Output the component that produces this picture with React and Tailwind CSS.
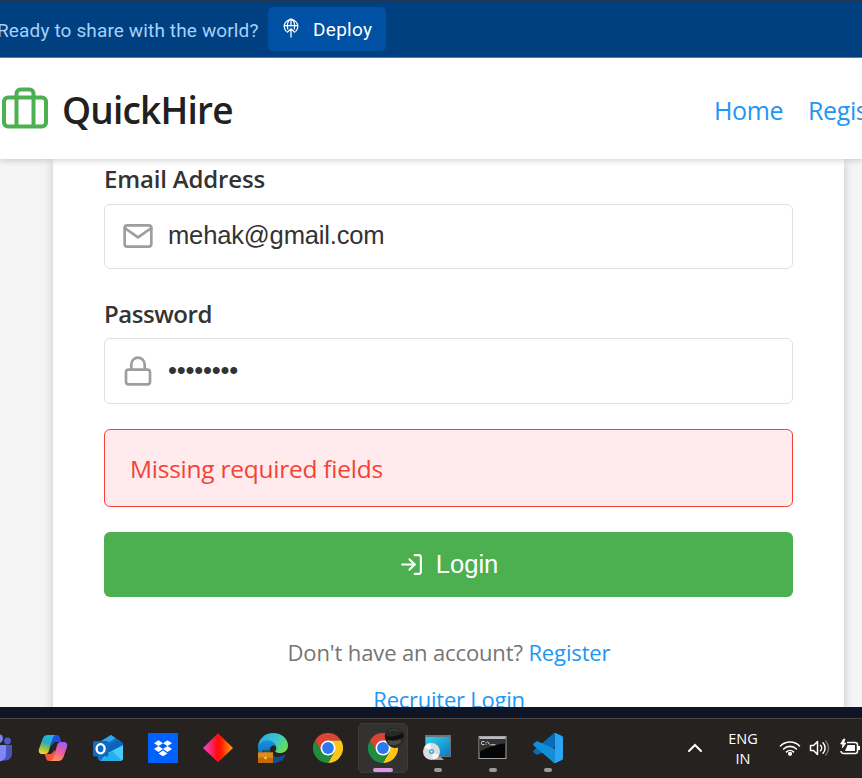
import React from 'react';
import { FiMail, FiLock, FiLogIn } from 'react-icons/fi';

const segoe = "font-['Open_Sans','Noto_Sans',sans-serif]";

function DeployIcon() {
  return (
    <svg width="16" height="20" viewBox="0 0 16 20" fill="none" stroke="#fff" strokeWidth="1.25" strokeLinecap="round">
      <path d="M3.200 13.200A6.800 6.800 0 1 1 12.800 13.200" />
      <path d="M4.800 11C3.500 6.800 5 1.600 8 1.200C11 1.600 12.500 6.800 11.200 11" />
      <path d="M1.500 7.500H14.500M8 1.200V8M8 11V19M4.300 14.200L8 10.800L11.700 14.200" />
    </svg>
  );
}

function Suitcase() {
  return (
    <svg width="48" height="44" viewBox="0 0 48 44" fill="none" stroke="#4caf50" strokeWidth="4" strokeLinejoin="round">
      <rect x="4" y="10.5" width="42" height="29" rx="4" />
      <path d="M16.5 39.5V6.5a4 4 0 0 1 4-4h9a4 4 0 0 1 4 4v33" />
    </svg>
  );
}

function Teams() {
  return (
    <svg width="30" height="30" viewBox="0 0 30 30">
      <circle cx="24.5" cy="8" r="3.4" fill="#5059c9" />
      <circle cx="15.5" cy="5.5" r="4.5" fill="#7b83eb" />
      <path d="M17 12h12v8.5c0 4-3 7-6.500 7H17z" fill="#4b53bc" />
      <path d="M6 12h17v9c0 5-3.500 7.500-8.500 7.500S6 26 6 21z" fill="#7f85f5" />
    </svg>
  );
}

function Copilot() {
  return (
    <svg width="30" height="30" viewBox="0 0 30 30">
      <defs>
        <linearGradient id="cpA" x1=".6" y1="0" x2=".3" y2="1">
          <stop offset="0" stopColor="#20b5ee" /><stop offset=".4" stopColor="#2aa8c0" />
          <stop offset=".7" stopColor="#8bc34a" /><stop offset="1" stopColor="#ffd21f" />
        </linearGradient>
        <linearGradient id="cpB" x1=".7" y1="0" x2=".3" y2="1">
          <stop offset="0" stopColor="#a05cf0" /><stop offset=".5" stopColor="#ee5c9c" /><stop offset="1" stopColor="#ff9a55" />
        </linearGradient>
      </defs>
      <path d="M14 2h5c2 0 2.600 1.500 3.200 3.600L23.500 9H17l-4 4z" fill="#1d4fd8" />
      <path d="M16 28h-5c-2 0-2.600-1.500-3.200-3.600L6.500 21H13l4-4z" fill="#f2553d" />
      <path d="M10 2h8c-2 0-3 2-3.600 4l-3.600 12c-.7 2.200-1.800 3-3.600 3H4c-3 0-3.700-2.500-3-5L4.500 6C5.500 3.500 7 2 10 2z" fill="url(#cpA)" />
      <path d="M20 28h-8c2 0 3-2 3.600-4l3.600-12c.7-2.200 1.800-3 3.600-3H26c3 0 3.700 2.500 3 5l-3.500 10c-1 2.500-2.500 4-5.500 4z" fill="url(#cpB)" />
    </svg>
  );
}

function Outlook() {
  return (
    <svg width="30" height="30" viewBox="0 0 30 30">
      <path d="M5 10L18 2l12 8v15a3 3 0 0 1-3 3H8a3 3 0 0 1-3-3z" fill="#1473c8" />
      <path d="M5 10L18 2l4.500 3L7 15z" fill="#2fa7ea" />
      <path d="M10 15L25 6.500l5 3.500v4L14 23z" fill="#0a63bd" />
      <path d="M13 21L30 12v13a3 3 0 0 1-3 3H8z" fill="#45cdf8" />
      <path d="M8 28l11-10 10 9.500-2 .5z" fill="#28aee9" />
      <rect x="0" y="8" width="15.500" height="15.500" rx="1.500" fill="#0f6cbd" />
      <ellipse cx="7.600" cy="15.700" rx="4" ry="4.600" fill="none" stroke="#fff" strokeWidth="2.300" />
    </svg>
  );
}

function Dropbox() {
  return (
    <svg width="30" height="30" viewBox="0 0 30 30">
      <rect width="30" height="30" fill="#0061ff" />
      <path d="M10.500 7.300l4.500 2.900-4.500 2.900-4.500-2.900zM19.500 7.300l4.500 2.900-4.500 2.900-4.500-2.900zM10.500 13.100l4.500 2.900-4.500 2.900L6 16zM19.500 13.100L24 16l-4.500 2.900L15 16zM15 17.500l4.500 2.900-4.500 2.900-4.500-2.900z" fill="#fff" />
    </svg>
  );
}

function Diamond() {
  return (
    <svg width="30" height="30" viewBox="0 0 30 30">
      <defs>
        <linearGradient id="dm" x1="0" x2="1">
          <stop offset="0" stopColor="#f04ad8" /><stop offset=".48" stopColor="#ff0a14" />
          <stop offset=".6" stopColor="#ff1a00" /><stop offset="1" stopColor="#ffa514" />
        </linearGradient>
      </defs>
      <path d="M15 .3L30 15 15 29.300 0 15z" fill="url(#dm)" />
    </svg>
  );
}

function Edge() {
  return (
    <svg width="30" height="30" viewBox="0 0 30 30">
      <defs>
        <linearGradient id="edA" x1="0" y1=".2" x2="1" y2=".7">
          <stop offset="0" stopColor="#2aa9e0" /><stop offset=".5" stopColor="#35c4d8" /><stop offset="1" stopColor="#6ee04c" />
        </linearGradient>
        <linearGradient id="edB" x1="0" y1="0" x2="0" y2="1">
          <stop offset="0" stopColor="#1590df" /><stop offset="1" stopColor="#0a5fb4" />
        </linearGradient>
      </defs>
      <path d="M0 15C0 6 7 0 15 0c9 0 15 6 15 12.500 0 5-4 7.500-8 7.500-3.500 0-5.500-1.200-4.500-2.500 1-1.200 1-2 .8-3C17.500 10 12 7 8 8 4 9 1 12 0 15z" fill="url(#edA)" />
      <path d="M0 15c1-5 5-7.600 9.500-7.400 4.500.2 8 3 8.700 6-2.200-2.500-6.200-.6-6.500 3C11.300 22 16 25 21 24c3-.5 5-1.500 6.500-2C25 27 20.500 30 15 30 7 30 0 24 0 15z" fill="url(#edB)" />
      <path d="M11.700 16.600C11.300 22 16 25 21 24c3-.5 5-1.500 6.500-2C25 27 20.500 30 15 30z" fill="#124d91" />
      <path d="M5 20v-2h5v2" fill="none" stroke="#3b2a18" strokeWidth="1.200" />
      <rect x="0" y="19.500" width="15" height="10.500" fill="#c06a0a" />
      <rect x="0" y="19.500" width="15" height="5" fill="#df8a1a" />
      <circle cx="7.500" cy="25" r="1.200" fill="#ffe23c" />
    </svg>
  );
}

function Chrome() {
  return (
    <svg width="30" height="30" viewBox="0 0 30 30">
      <path d="M15 7.500H28A15 15 0 0 0 2 7.500L8.500 18.750z" fill="#db4437" />
      <path d="M28 7.500H15L21.500 18.750 15 30A15 15 0 0 0 28 7.500z" fill="#ffc61a" />
      <path d="M2 7.500A15 15 0 0 0 15 30l6.500-11.250h-13z" fill="#1e8e3e" />
      <circle cx="15" cy="15" r="7.500" fill="#fff" />
      <circle cx="15" cy="15" r="5.900" fill="#2c79ee" />
    </svg>
  );
}

function Installer() {
  return (
    <svg width="30" height="30" viewBox="0 0 30 30">
      <defs>
        <linearGradient id="ins" x1="0" y1="0" x2="1" y2="1">
          <stop offset="0" stopColor="#35d0e8" /><stop offset="1" stopColor="#0b78c6" />
        </linearGradient>
      </defs>
      <rect x="2" y="2" width="26" height="22" fill="#6b747c" />
      <rect x="3" y="4" width="24" height="19" fill="url(#ins)" />
      <path d="M13 24h5l3 3h-9z" fill="#9aa2a8" />
      <circle cx="8.500" cy="18.500" r="8.500" fill="#dcdcde" />
      <path d="M8.500 18.500L1.300 14A8.500 8.500 0 0 1 7.300 10.100zM8.500 18.500l7.600 3.800A8.500 8.500 0 0 1 10.300 26.800z" fill="#f8f8f8" />
      <circle cx="8.500" cy="18.500" r="2.600" fill="#35aede" />
      <circle cx="8.500" cy="18.500" r="1.100" fill="#e8f8ff" />
    </svg>
  );
}

function Terminal() {
  return (
    <svg width="30" height="30" viewBox="0 0 30 30">
      <rect x="1" y="3.500" width="27" height="22" fill="#060606" stroke="#a3a6aa" />
      <rect x="1.500" y="4" width="26" height="2" fill="#b9bcc0" />
      <path d="M1.500 6h26v4.500C18 11 8 15 1.500 19z" fill="#333" />
      <path d="M6.300 8.500H4.500a1 1 0 0 0-1 1v1a1 1 0 0 0 1 1h1.800M8 9.200v.9M8 10.800v.8M9.500 8.500l2 3M12.500 11.800h5" fill="none" stroke="#eee" strokeWidth=".9" />
    </svg>
  );
}

function VsCode() {
  return (
    <svg width="30" height="30" viewBox="0 0 30 30">
      <path d="M30 4.500v6L5 21.500c-.6.500-1.300.4-1.800 0L.6 19.400c-.6-.6-.6-1.400 0-2L20.500.5c.7-.6 1.500-.6 2.300-.3z" fill="#0a6db4" />
      <path d="M30 25.500v-6L5 8.500c-.6-.5-1.300-.4-1.800 0L.6 10.600c-.6.600-.6 1.400 0 2L20.500 29.500c.7.600 1.500.6 2.300.3z" fill="#118fd8" />
      <path d="M22.500.1c-.3-.1 6.500 3 6.500 3 .7.400 1 .9 1 1.600v20.600c0 .7-.3 1.200-1 1.600l-6.500 3c-.8.300-1.500-.1-2-.5 1 .6 1.500-.1 1.500-1V1.600c0-1-.8-1.600-1.500-1 .6-.6 1.300-.8 2-.5z" fill="#2ba5f3" />
    </svg>
  );
}

function Avatar() {
  return (
    <svg className="absolute left-[25px] top-[3px]" width="21" height="21" viewBox="0 0 21 21">
      <path d="M1 7C2 3 6 .5 10.500.5S20 4 20.200 9 17 19 14 20.500 5 20 3 16 .3 10 1 7z" fill="#292926" />
      <path d="M1 8c5 3 12 1 18-2l1 4c-6 4-13 4-19 2z" fill="#11110f" />
      <path d="M4 13c4 1.500 8 1.500 12-1l1 3c-3 3-8 4-12 2z" fill="#4c4c43" />
      <path d="M5 4c3-1.500 7-1.500 10 0M5 15l6 1.500M13 15l3-1.500" stroke="#45453e" strokeWidth="1.200" fill="none" />
    </svg>
  );
}

const tasks = [
  { Icon: Teams }, { Icon: Copilot }, { Icon: Outlook }, { Icon: Dropbox }, { Icon: Diamond }, { Icon: Edge },
  { Icon: Chrome }, { Icon: Chrome, active: true }, { Icon: Installer, open: true },
  { Icon: Terminal, open: true }, { Icon: VsCode, open: true },
];

function Task({ Icon, active, open }) {
  return (
    <div className="flex h-[58px] w-[55px] shrink-0 items-center justify-center">
      <div className={`relative flex h-[50px] w-[50px] items-center justify-center rounded-[5px] ${active ? 'border border-[#3d3b39] bg-[#343230]' : ''}`}>
        <Icon />
        {active && <Avatar />}
        {active && <span className="absolute bottom-0 left-[14px] h-1 w-5 rounded-full bg-[#d99ae0]" />}
        {open && <span className="absolute bottom-[1px] left-[21px] h-1 w-2 rounded-full bg-[#9c9a98]" />}
      </div>
    </div>
  );
}

export default function App() {
  return (
    <div className={`flex h-[778px] w-[862px] flex-col overflow-hidden bg-[#f5f5f5] ${segoe}`}>
      <div className="flex h-[58px] shrink-0 items-center border-b border-t border-b-[#5d83ac] border-t-[#26344e] bg-[#004080] font-['Roboto',sans-serif]">
        <span className="-ml-[3px] w-[271px] whitespace-nowrap pt-[3px] text-[19px] leading-7 tracking-[0.14px] text-[#a3d2ff]">Ready to share with the world?</span>
        <button className="flex h-11 w-[118px] items-center rounded-[5px] bg-[#0050a4] pl-[15px] pt-[3px] text-[19px] tracking-[0.3px] text-white">
          <span className="mb-[5px] mr-[14px]"><DeployIcon /></span>Deploy
        </button>
      </div>

      <header className="z-10 flex h-[101px] shrink-0 items-center bg-white shadow-[0_2px_6px_rgba(0,0,0,0.16)]">
        <div className="flex w-[714px] shrink-0 items-center">
          <Suitcase />
          <span className="ml-[14px] pt-[3px] text-[37px] font-semibold leading-[50px] tracking-[-0.8px] text-[#212121]">QuickHire</span>
        </div>
        <nav className="flex shrink-0 gap-[25px] whitespace-nowrap pt-[2px] text-[25px] leading-9 tracking-[-0.4px] text-[#2196f3]">
          <a>Home</a><a>Register</a>
        </nav>
      </header>

      <main className="h-[548px] shrink-0 overflow-hidden">
        <section className="ml-[53px] flex h-[600px] w-[791px] flex-col bg-white pl-[52px] pr-[51px] shadow-[0_3px_10px_rgba(0,0,0,0.2)]">
          <label className="-ml-px h-[45px] pt-[2px] text-[24px] font-semibold leading-9 tracking-[-0.17px] text-[#333]">Email Address</label>
          <div className="-ml-px flex h-[65px] items-center rounded-[6px] border border-[#e0e0e0] pl-[17px] font-['Liberation_Sans',Arial,sans-serif] text-[25.6px] tracking-[-0.2px] text-[#333]">
            <FiMail className="mb-[2px] mr-[14px] h-8 w-8 text-[#9e9e9e]" />
            <span className="mb-[2px]">mehak@gmail.com</span>
          </div>
          <label className="-ml-px h-[69px] pt-[27px] text-[24px] font-semibold leading-9 tracking-[-0.45px] text-[#333]">Password</label>
          <div className="-ml-px flex h-[66px] items-center rounded-[6px] border border-[#e0e0e0] pl-[17px]">
            <FiLock className="mr-[14px] h-8 w-8 text-[#9e9e9e]" />
            <span className="mb-[2px] font-['Liberation_Sans',Arial,sans-serif] text-[25.6px] leading-8 tracking-[-0.2px] text-[#333]">••••••••</span>
          </div>
          <div className="-ml-px mt-[25px] flex h-[78px] items-center rounded-[6px] border border-[#f44336] bg-[#ffebee] pl-[25px] pt-[2px] text-[24.5px] tracking-[-0.25px] text-[#f44336]">
            Missing required fields
          </div>
          <button className="-ml-px mt-[25px] flex h-[65px] items-center justify-center gap-[12px] rounded-[6px] bg-[#4caf50] font-['Liberation_Sans',Arial,sans-serif] text-[25.6px] text-white">
            <FiLogIn className="h-[25px] w-[25px]" /><span>Login</span>
          </button>
          <p className="mt-[37px] h-[36px] whitespace-nowrap text-center text-[22px] leading-9 tracking-[-0.13px] text-[#757575]">
            Don't have an account? <a className="text-[#2196f3]">Register</a>
          </p>
          <a className="mt-[11px] text-center text-[22px] leading-9 tracking-[-0.25px] text-[#2196f3]">Recruiter Login</a>
        </section>
      </main>

      <div className="z-10 h-[11px] shrink-0 bg-[#0f1524]" />
      <footer className="z-10 flex h-[60px] shrink-0 items-start border-t border-[#484542] bg-[#252220] text-white">
        <div className="-ml-[30px] flex w-[705px] shrink-0">
          {tasks.map((t, i) => <Task key={i} {...t} />)}
        </div>
        <div className="flex h-[58px] shrink-0 items-center">
          <svg className="ml-[12px] shrink-0" width="16" height="10" viewBox="0 0 16 10" fill="none" stroke="#fff" strokeWidth="2" strokeLinecap="round"><path d="M2 8L8 2l6 6" /></svg>
          <div className="ml-[20px] w-[40px] shrink-0 pt-[2px] text-center text-[14.5px] leading-5">ENG<br />IN</div>
          <div className="ml-[16px] flex shrink-0 items-center gap-[8px]">
            <svg width="22" height="18" viewBox="0 0 22 18" fill="none" stroke="#fff" strokeWidth="1.600" strokeLinecap="round">
              <path d="M1.500 7a13.400 13.400 0 0 1 19 0M4.600 10a9 9 0 0 1 12.800 0M7.500 12.900a5 5 0 0 1 7 0" /><circle cx="11" cy="14.800" r="1.300" fill="#fff" />
            </svg>
            <svg width="22" height="18" viewBox="0 0 22 18" fill="none" stroke="#fff" strokeWidth="1.500" strokeLinecap="round" strokeLinejoin="round">
              <path d="M1.500 6.500h3L8.500 2.500v13l-4-4h-3zM11.500 6.200a4 4 0 0 1 0 5.600M14 3.800a7.500 7.500 0 0 1 0 10.400" /><path d="M16.700 2a10 10 0 0 1 0 14" stroke="#77736f" />
            </svg>
            <svg width="22" height="20" viewBox="0 0 22 20" fill="none" stroke="#fff" strokeWidth="1.500" strokeLinejoin="round">
              <path d="M8 4.500h8a2.500 2.500 0 0 1 2.500 2.500v6a2.500 2.500 0 0 1-2.500 2.500H4.500A2.500 2.500 0 0 1 2 13" />
              <path d="M8.500 7h7.500v6H6zM19 8h2v4h-2z" fill="#fff" stroke="none" />
              <path d="M4.500 1L1.500 6h2.300l-.5 4L7 5H4.800L6 1z" fill="#fff" strokeWidth=".7" />
            </svg>
          </div>
        </div>
      </footer>
    </div>
  );
}
